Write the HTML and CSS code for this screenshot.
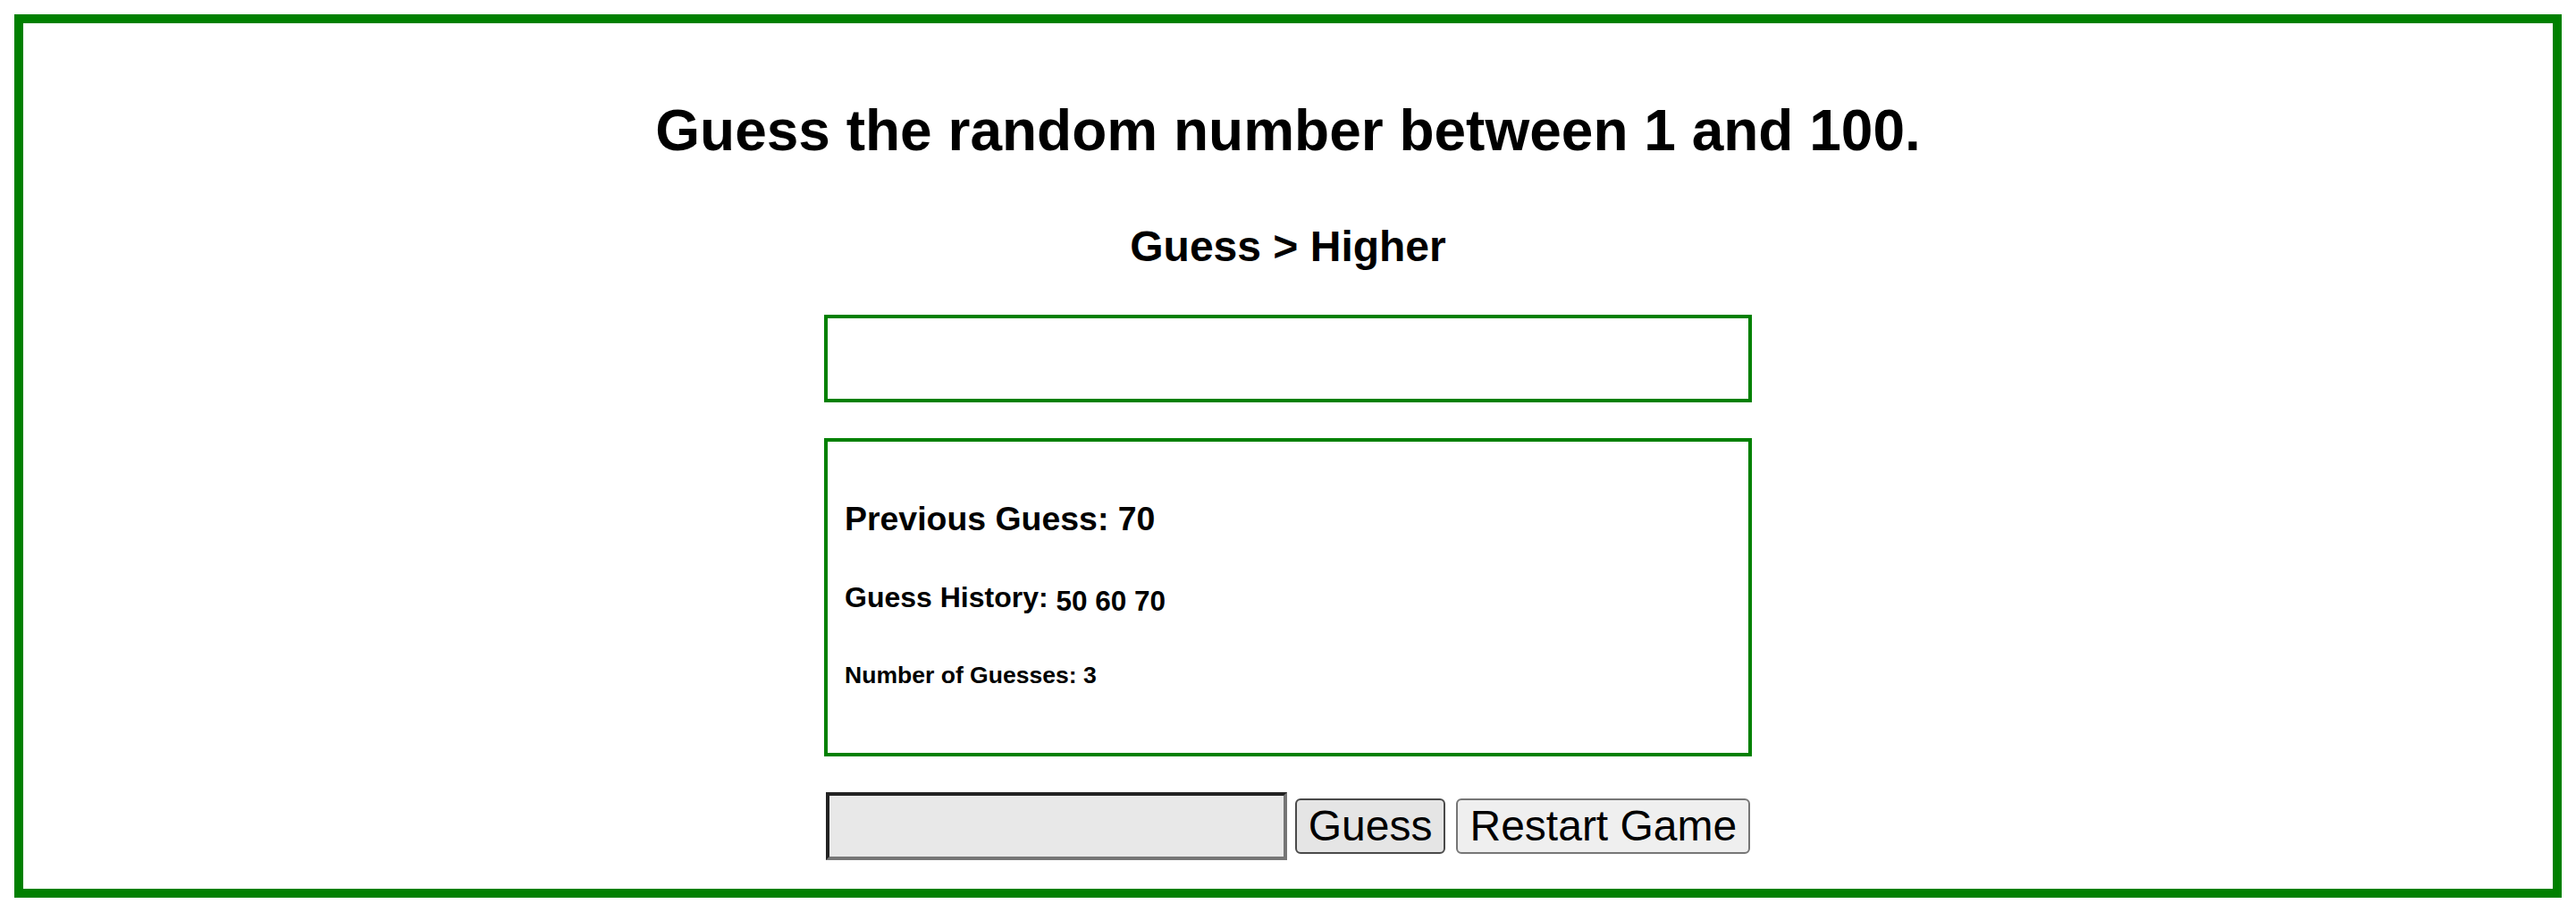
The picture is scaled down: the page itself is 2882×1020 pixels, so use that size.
FILE: index.html
```html
<!DOCTYPE html>
<html lang="en">
<head>
<meta charset="utf-8">
<title>Number Guessing Game</title>
<link rel="stylesheet" href="styles.css">
</head>
<body>
<main class="frame">
  <h1 class="title">Guess the random number between 1 and 100.</h1>
  <h2 class="status">Guess &gt; Higher</h2>
  <section class="panel panel-empty"></section>
  <section class="panel panel-stats">
    <h3 class="prev">Previous Guess: 70</h3>
    <h4 class="history">Guess History: <span class="history-nums">50 60 70</span></h4>
    <h5 class="count">Number of Guesses: 3</h5>
  </section>
  <div class="controls">
    <input class="guess-input" type="text" aria-label="Your guess">
    <button class="btn btn-guess" type="button">Guess</button>
    <button class="btn btn-restart" type="button">Restart Game</button>
  </div>
</main>
</body>
</html>
```
FILE: styles.css
```css
* { box-sizing: border-box; }

html, body { background: #ffffff; }

body {
  margin: 16px;
  font-family: "Liberation Sans", Arial, Helvetica, sans-serif;
  color: #000;
}

.frame {
  height: 988px;
  border: 10px solid #008000;
  padding: 84px 0 0;
  display: flex;
  flex-direction: column;
  align-items: center;
}

.title {
  margin: 0;
  font-size: 64px;
  line-height: 73.6px;
  font-weight: bold;
  text-align: center;
}

.status {
  margin: 64px 0 0;
  font-size: 48px;
  line-height: 55.2px;
  font-weight: bold;
  text-align: center;
}

.panel {
  width: 1038px;
  border: 4px solid #008000;
}

.panel-empty {
  margin-top: 49px;
  height: 98px;
}

.panel-stats {
  margin-top: 40px;
  height: 356px;
  padding: 65px 19px 0;
}

.prev {
  margin: 0;
  font-size: 37.44px;
  line-height: 43px;
  font-weight: bold;
}

.history {
  margin: 48px 0 0;
  font-size: 32px;
  line-height: 36.8px;
  font-weight: bold;
}

.history-nums {
  font-size: 31.5px;
  vertical-align: -4px;
}

.count {
  margin: 49px 0 0;
  font-size: 26.56px;
  line-height: 30.5px;
  font-weight: bold;
}

.controls {
  margin-top: 40px;
  width: 1038px;
  display: flex;
  align-items: center;
  justify-content: center;
  gap: 9px;
}

.guess-input {
  width: 516px;
  height: 76px;
  margin: 0;
  background: #e8e8e8;
  border-style: solid;
  border-width: 4px;
  border-color: #222222 #767676 #767676 #222222;
  font: 48px "Liberation Sans", Arial, sans-serif;
  padding: 0 6px;
}

.btn {
  margin: 0;
  height: 62px;
  padding: 0 13px;
  font: 48px/54px "Liberation Sans", Arial, sans-serif;
  color: #000;
  border-radius: 6px;
  border: 2px solid #767676;
  background: #efefef;
}

.btn-guess {
  background: #e5e5e5;
  border-color: #4a4a4a;
}

.btn-restart {
  margin-left: 3px;
}
```
